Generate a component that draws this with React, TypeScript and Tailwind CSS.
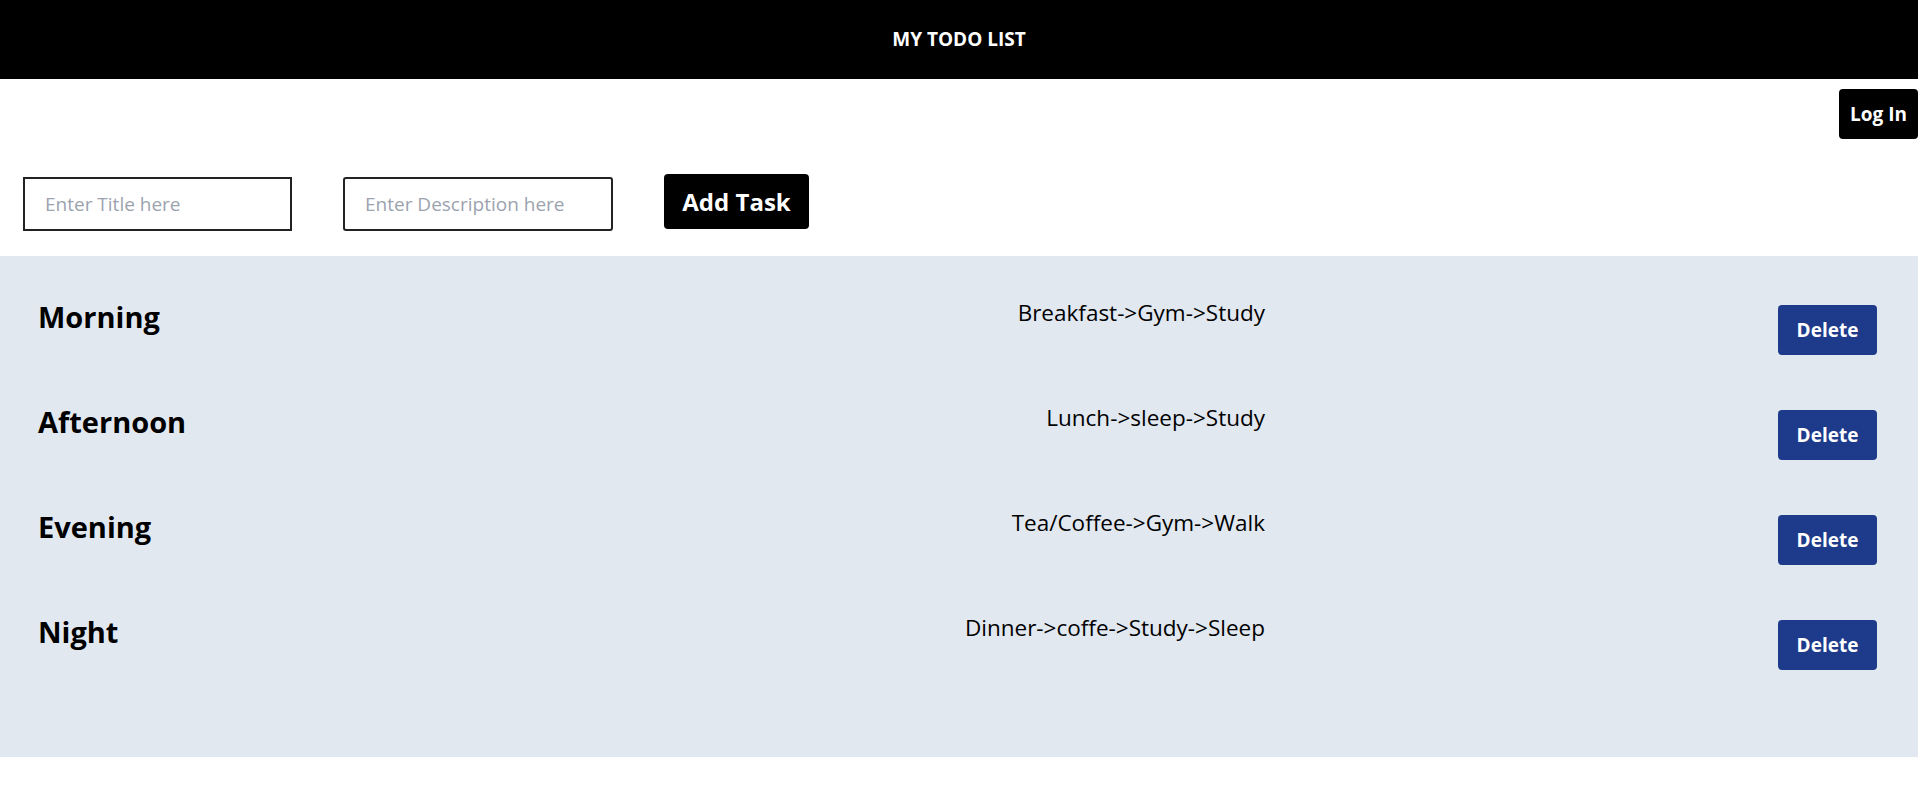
const tasks = [
  { title: 'Morning', desc: 'Breakfast->Gym->Study' },
  { title: 'Afternoon', desc: 'Lunch->sleep->Study' },
  { title: 'Evening', desc: 'Tea/Coffee->Gym->Walk' },
  { title: 'Night', desc: 'Dinner->coffe->Study->Sleep' },
];

export default function App() {
  return (
    <div className="min-h-screen bg-white text-black" style={{ fontFamily: '"Open Sans", "Noto Sans", sans-serif' }}>
      {/* Header */}
      <header className="h-[79px] bg-black flex items-center justify-center">
        <h1 className="text-white font-bold text-[19px]">MY TODO LIST</h1>
      </header>

      {/* Log in */}
      <div className="flex justify-end pt-[10px]">
        <button className="w-[79px] h-[50px] bg-black text-white font-bold text-[19px] rounded-[4px]">
          Log In
        </button>
      </div>

      {/* Add form */}
      <div className="flex items-center gap-[51px] pl-[23px] pt-[38px] pb-[25px]">
        <input
          className="w-[269px] h-[54px] border-2 border-[#222] px-[20px] text-[19px] placeholder:text-[#9ca3af] outline-none"
          placeholder="Enter Title here"
        />
        <input
          className="w-[270px] h-[54px] border-2 border-[#222] rounded-[3px] px-[20px] text-[19px] placeholder:text-[#9ca3af] outline-none"
          placeholder="Enter Description here"
        />
        <button className="w-[145px] h-[55px] bg-black text-white font-bold text-[24px] rounded-[4px] -mt-[5px]">
          Add Task
        </button>
      </div>

      {/* Task list */}
      <section className="bg-[#e2e8f0] pt-[49px] pb-[87px] px-[41px] flex flex-col gap-[55px]">
        {tasks.map((t) => (
          <div key={t.title} className="grid grid-cols-3 items-start">
            <h2 className="font-bold text-[29px] leading-[34px] -mt-[5px] -ml-[3px]">{t.title}</h2>
            <p className="text-right text-[22.5px] leading-[28px] -mt-[6px]">{t.desc}</p>
            <div className="flex justify-end">
              <button className="w-[99px] h-[50px] bg-[#1e3a8a] text-white font-bold text-[19px] rounded-[4px]">
                Delete
              </button>
            </div>
          </div>
        ))}
      </section>
    </div>
  );
}
